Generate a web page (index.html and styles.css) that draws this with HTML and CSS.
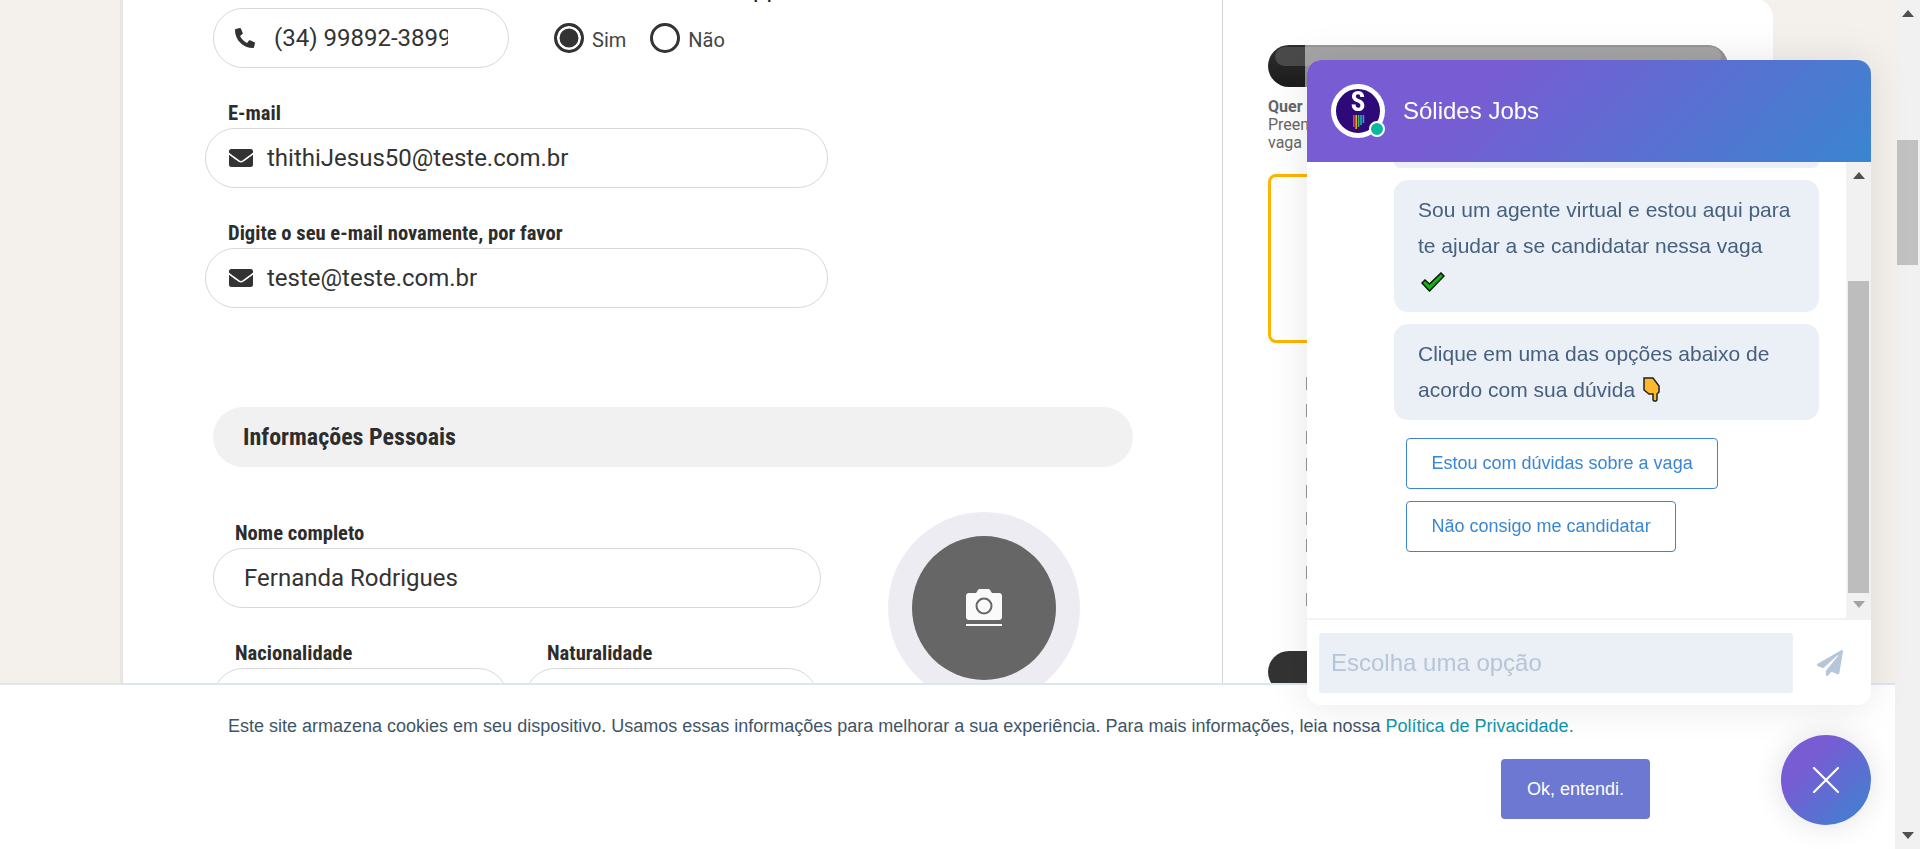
FILE: index.html
```html
<!DOCTYPE html>
<html lang="pt-BR">
<head>
    <meta charset="UTF-8">
    <meta name="viewport" content="width=device-width, initial-scale=1.0">
    <title>Candidatura</title>
    <link rel="stylesheet" href="styles.css">
</head>
<body>
    <div class="page">
        <div class="viewport">
            <div class="card">
                <!-- Form column -->
                <div class="form-col">
                    <div class="phone-row">
                        <div class="field field-phone">
                            <label class="field-label">Telefone ou celular</label>
                            <div class="input-box">
                                <svg class="icon-phone" viewBox="0 0 512 512"><path fill="#333" transform="matrix(-1 0 0 1 512 0)" d="M493.4 24.6l-104-24c-11.3-2.6-22.9 3.3-27.5 13.9l-48 112c-4.2 9.8-1.4 21.3 6.9 28l60.6 49.6c-36 76.7-98.9 140.5-177.2 177.2l-49.6-60.6c-6.8-8.3-18.2-11.1-28-6.9l-112 48C3.9 366.5-2 378.1.6 389.4l24 104C27.1 504.2 36.7 512 48 512c256.1 0 464-207.5 464-464 0-11.2-7.7-20.9-18.6-23.4z"/></svg>
                                <input class="text-input phone-input" type="text" value="(34) 99892-3899">
                            </div>
                        </div>
                        <div class="whats">
                            <div class="whats-label">Este número é WhatsApp</div>
                            <div class="radios">
                                <span class="radio radio-on"></span><span class="radio-text">Sim</span>
                                <span class="radio"></span><span class="radio-text">Não</span>
                            </div>
                        </div>
                    </div>

                    <div class="field field-wide">
                        <label class="field-label">E-mail</label>
                        <div class="input-box">
                            <svg class="icon-mail" viewBox="0 0 512 512"><path fill="#333" d="M502.3 190.8c3.9-3.1 9.7-.2 9.7 4.7V400c0 26.5-21.5 48-48 48H48c-26.5 0-48-21.5-48-48V195.6c0-5 5.7-7.8 9.7-4.7 22.4 17.4 52.1 39.5 154.1 113.6 21.1 15.4 56.7 47.8 92.2 47.6 35.7.3 72-32.8 92.3-47.6 102-74.1 131.6-96.3 154-113.7zM256 320c23.2.4 56.6-29.2 73.4-41.4 132.7-96.3 142.8-104.7 173.4-128.7 5.8-4.5 9.2-11.5 9.2-18.9v-19c0-26.5-21.5-48-48-48H48C21.5 64 0 85.5 0 112v19c0 7.4 3.4 14.3 9.2 18.9 30.6 23.9 40.7 32.4 173.4 128.7 16.8 12.2 50.2 41.8 73.4 41.4z"/></svg>
                            <input class="text-input" type="text" value="thithiJesus50@teste.com.br">
                        </div>
                    </div>

                    <div class="field field-wide">
                        <label class="field-label">Digite o seu e-mail novamente, por favor</label>
                        <div class="input-box">
                            <svg class="icon-mail" viewBox="0 0 512 512"><path fill="#333" d="M502.3 190.8c3.9-3.1 9.7-.2 9.7 4.7V400c0 26.5-21.5 48-48 48H48c-26.5 0-48-21.5-48-48V195.6c0-5 5.7-7.8 9.7-4.7 22.4 17.4 52.1 39.5 154.1 113.6 21.1 15.4 56.7 47.8 92.2 47.6 35.7.3 72-32.8 92.3-47.6 102-74.1 131.6-96.3 154-113.7zM256 320c23.2.4 56.6-29.2 73.4-41.4 132.7-96.3 142.8-104.7 173.4-128.7 5.8-4.5 9.2-11.5 9.2-18.9v-19c0-26.5-21.5-48-48-48H48C21.5 64 0 85.5 0 112v19c0 7.4 3.4 14.3 9.2 18.9 30.6 23.9 40.7 32.4 173.4 128.7 16.8 12.2 50.2 41.8 73.4 41.4z"/></svg>
                            <input class="text-input" type="text" value="teste@teste.com.br">
                        </div>
                    </div>

                    <h2 class="section-bar">Informações Pessoais</h2>

                    <div class="personal">
                        <div class="personal-fields">
                            <div class="field">
                                <label class="field-label">Nome completo</label>
                                <div class="input-box input-plain">
                                    <input class="text-input" type="text" value="Fernanda Rodrigues">
                                </div>
                            </div>
                            <div class="field-pair">
                                <div class="field field-nat">
                                    <label class="field-label">Nacionalidade</label>
                                    <div class="input-box"></div>
                                </div>
                                <div class="field field-nat2">
                                    <label class="field-label">Naturalidade</label>
                                    <div class="input-box"></div>
                                </div>
                            </div>
                        </div>
                        <div class="photo">
                            <div class="photo-inner">
                                <svg width="36" height="38" viewBox="0 0 36 38">
                                    <path fill="#fafafa" d="M3 4h7l2-3c.5-.7 1-1 2-1h8c1 0 1.500.3 2 1l2 3h7c1.700 0 3 1.300 3 3v21c0 1.700-1.300 3-3 3H3c-1.700 0-3-1.300-3-3V7c0-1.700 1.300-3 3-3z"/>
                                    <circle cx="18" cy="17" r="7.500" fill="none" stroke="#666" stroke-width="2"/>
                                    <rect y="35" width="36" height="2" fill="#fafafa"/>
                                </svg>
                            </div>
                        </div>
                    </div>
                </div>

                <!-- Right column, mostly under the chat -->
                <div class="side-col">
                    <div class="pill"></div>
                    <p class="side-text"><b>Quer se candidatar?</b><br>Preencha os dados abaixo para se candidatar à<br>vaga</p>
                    <div class="gold-box"></div>
                    <ul class="perks">
                        <li></li><li></li><li></li><li></li><li></li><li></li><li></li><li></li><li></li>
                    </ul>
                    <div class="pill pill-plain"></div>
                </div>
            </div>
        </div>

        <div class="page-scroll">
            <span class="arrow-up"></span>
            <span class="page-thumb"></span>
            <span class="arrow-down"></span>
        </div>
    </div>

    <div class="cookie-bar">
        <p class="cookie-text">Este site armazena cookies em seu dispositivo. Usamos essas informações para melhorar a sua experiência. Para mais informações, leia nossa <a href="#">Política de Privacidade.</a></p>
        <button class="cookie-btn">Ok, entendi.</button>
    </div>

    <div class="chat">
        <div class="chat-head">
            <div class="avatar">
                <span class="avatar-s">S</span>
                <svg class="avatar-bars" width="12" height="14" viewBox="0 0 12 14">
                    <rect x="0" width="1.600" height="12" fill="#e0453a"/>
                    <rect x="2.400" width="1.600" height="14" fill="#f0a52c"/>
                    <rect x="4.800" width="1.600" height="12" fill="#3fb56a"/>
                    <rect x="7.200" width="1.600" height="10" fill="#1fb5b0"/>
                    <rect x="9.600" width="1.600" height="8" fill="#2f9fe0"/>
                </svg>
                <span class="avatar-dot"></span>
            </div>
            <span class="chat-title">Sólides Jobs</span>
        </div>

        <div class="chat-body">
            <div class="chat-msgs">
                <div class="bubble bubble-cut"></div>
                <div class="bubble">
                    Sou um agente virtual e estou aqui para te ajudar a se candidatar nessa vaga
                    <div class="emoji-line">
                        <svg width="24" height="20" viewBox="0 0 24 20"><path fill="#12b312" stroke="#111" stroke-width="1.500" d="M1 11l3-3 4.500 4L20 1l3 3L8.500 19z"/></svg>
                    </div>
                </div>
                <div class="bubble">
                    Clique em uma das opções abaixo de acordo com sua dúvida
                    <svg class="emoji-hand" width="18" height="25" viewBox="0 0 18 25"><path fill="#fdb92e" stroke="#222" stroke-width="1.500" d="M1 1h9l6 8v6l-2 2v6l-1 1h-2l-1-1v-6H6L1 13z"/></svg>
                </div>
                <div class="chat-options">
                    <button class="option-btn">Estou com dúvidas sobre a vaga</button>
                    <button class="option-btn">Não consigo me candidatar</button>
                </div>
            </div>
            <div class="chat-scroll">
                <span class="arrow-up"></span>
                <span class="chat-thumb"></span>
                <span class="arrow-down arrow-gray"></span>
            </div>
        </div>

        <div class="chat-foot">
            <input class="chat-input" type="text" placeholder="Escolha uma opção">
            <svg class="send-icon" viewBox="0 0 512 512"><path fill="#b6c6d9" d="M476 3.200L12.500 270.600c-18.100 10.400-15.800 35.600 2.200 43.200L121 358.400l287.300-253.200c5.500-4.900 13.300 2.600 8.600 8.300L176 407v80.500c0 23.600 28.500 32.900 42.500 15.800L282 426l124.600 52.200c14.200 6 30.400-2.900 33-18.200l72-432C515 7.800 493.300-6.800 476 3.200z"/></svg>
        </div>
    </div>

    <button class="chat-fab">
        <svg width="28" height="28" viewBox="0 0 28 28"><path stroke="#fff" stroke-width="2.200" stroke-linecap="round" d="M2 2l24 24M26 2L2 26"/></svg>
    </button>
</body>
</html>
```

FILE: styles.css
```css
body {
    margin: 0;
    height: 849px;
    overflow: hidden;
    background-color: #f4f1ed;
    font-family: Roboto, Arial, sans-serif;
    color: #333;
}
.page {
    display: flex;
    height: 849px;
}
.viewport {
    flex: 1;
    overflow: hidden;
}
.card {
    display: flex;
    width: 1650px;
    height: 1000px;
    margin: -2px 0 0 123px;
    background-color: #fff;
    border-radius: 0 20px 0 0;
    box-shadow: -3px 0 0 #e9e6e2;
}

/* form column */
.form-col {
    width: 1100px;
    height: 900px;
    margin-top: -17px;
    border-right: 1px solid #d5d5d5;
    box-sizing: border-box;
}
.field-label {
    display: block;
    height: 24px;
    line-height: 24px;
    margin-bottom: 3px;
    font-size: 20.6px;
    font-weight: 700;
    font-stretch: condensed;
    color: #2d2d2d;
    white-space: nowrap;
}
.input-box {
    display: flex;
    align-items: center;
    height: 60px;
    box-sizing: border-box;
    border: 1px solid #d8d8d8;
    border-radius: 30px;
    background-color: #fff;
}
.text-input {
    flex: 1;
    min-width: 0;
    border: none;
    outline: none;
    padding: 0;
    font-family: Roboto, Arial, sans-serif;
    font-size: 24px;
    color: #333;
    background: none;
}
.phone-row {
    display: flex;
    margin-bottom: 33px;
}
.field-phone {
    width: 296px;
    margin-left: 90px;
}
.field-phone .field-label {
    margin-left: 22px;
}
.field-phone .input-box {
    padding-left: 21px;
}
.icon-phone {
    width: 20px;
    height: 20px;
    margin-right: 19px;
}
.phone-input {
    flex: none;
    width: 174px;
}
.whats {
    margin-left: 45px;
    width: 226px;
}
.whats-label {
    height: 29px;
    line-height: 29px;
    margin: -6px 0 19px;
    font-size: 24px;
    text-align: right;
    white-space: nowrap;
    direction: rtl;
    color: #222;
}
.radios {
    display: flex;
    align-items: center;
}
.radio {
    width: 30px;
    height: 30px;
    box-sizing: border-box;
    border: 3.5px solid #333;
    border-radius: 50%;
    background-color: #fff;
}
.radio-on {
    background-color: #333;
    box-shadow: inset 0 0 0 2.5px #fff;
}
.radio-text {
    margin: 3px 24px 0 8px;
    font-size: 20px;
    color: #444;
}
.field-wide {
    width: 623px;
    margin: 0 0 33px 82px;
}
.field-wide .field-label {
    margin-left: 23px;
}
.field-wide .input-box {
    padding-left: 23px;
}
.icon-mail {
    width: 24px;
    height: 24px;
    margin-right: 14px;
}
.section-bar {
    width: 920px;
    height: 60px;
    margin: 99px 0 54px 90px;
    padding-left: 30px;
    box-sizing: border-box;
    line-height: 60px;
    font-size: 24px;
    font-weight: 700;
    font-stretch: condensed;
    color: #2d2d2d;
    background-color: #f1f1f1;
    border-radius: 30px;
}
.personal {
    display: flex;
    margin-left: 90px;
}
.personal-fields {
    width: 608px;
}
.personal-fields .field-label {
    margin-left: 22px;
}
.input-plain {
    padding-left: 30px;
}
.field-pair {
    display: flex;
    margin-top: 33px;
    gap: 17px;
}
.field-nat {
    width: 295px;
}
.field-nat2 {
    width: 293px;
}
.photo {
    display: flex;
    align-items: center;
    justify-content: center;
    width: 192px;
    height: 192px;
    margin: -9px 0 0 67px;
    border-radius: 50%;
    background-color: #eeecf3;
}
.photo-inner {
    display: flex;
    align-items: center;
    justify-content: center;
    width: 144px;
    height: 144px;
    border-radius: 50%;
    background-color: #666;
}

/* right column */
.side-col {
    flex: 1;
    padding: 47px 0 0 45px;
}
.pill {
    position: relative;
    width: 460px;
    height: 42px;
    overflow: hidden;
    border-radius: 21px;
    background: linear-gradient(#2e2e2e, #1c1c1c);
}
.pill::before {
    content: "";
    position: absolute;
    left: 7px;
    right: 7px;
    top: 2px;
    height: 19px;
    border-radius: 10px;
    background-color: #4a4a4a;
}
.pill::after {
    content: "";
    position: absolute;
    left: 37px;
    right: 0;
    top: 0;
    bottom: 0;
    background-color: rgba(255, 255, 255, 0.5);
}
.pill-plain {
    margin-top: 31px;
    background: #333;
}
.pill-plain::before,
.pill-plain::after {
    display: none;
}
.side-text {
    margin: 11px 0 22px;
    font-size: 16px;
    line-height: 18px;
    color: #666;
    white-space: nowrap;
}
.gold-box {
    width: 460px;
    height: 169px;
    box-sizing: border-box;
    border: 3px solid #ffb400;
    border-radius: 8px;
}
.perks {
    list-style: none;
    margin: 34px 0 0;
    padding: 0 0 0 38px;
}
.perks li {
    height: 27px;
}
.perks li::before {
    content: "";
    display: block;
    width: 2px;
    height: 13px;
    background-color: #999;
}

/* page scrollbar */
.page-scroll,
.chat-scroll {
    display: flex;
    flex-direction: column;
    align-items: center;
    width: 25px;
    background-color: #f1f1f1;
}
.arrow-up,
.arrow-down {
    width: 0;
    height: 0;
    border-left: 6px solid transparent;
    border-right: 6px solid transparent;
}
.arrow-up {
    margin-top: 10px;
    border-bottom: 7px solid #505050;
}
.arrow-down {
    margin-top: auto;
    margin-bottom: 10px;
    border-top: 7px solid #505050;
}
.arrow-gray {
    border-top-color: #a3a3a3;
}
.page-thumb {
    width: 21px;
    height: 125px;
    margin-top: 123px;
    background-color: #c1c1c1;
}
.chat-thumb {
    width: 21px;
    height: 312px;
    margin-top: 102px;
    background-color: #bdbdbd;
}

/* cookie bar */
.cookie-bar {
    position: fixed;
    left: 0;
    right: 25px;
    top: 683px;
    bottom: 0;
    display: flex;
    flex-direction: column;
    padding: 31px 245px 0 228px;
    border-top: 2px solid #dfe5ef;
    background-color: #fff;
}
.cookie-text {
    margin: 0;
    font-family: "Liberation Sans", Arial, sans-serif;
    font-size: 18px;
    line-height: 20px;
    color: #3e5568;
    white-space: nowrap;
}
.cookie-text a {
    color: #0e96ad;
    text-decoration: none;
}
.cookie-btn {
    align-self: flex-end;
    width: 149px;
    height: 60px;
    margin-top: 23px;
    border: none;
    border-radius: 4px;
    font-family: "Liberation Sans", Arial, sans-serif;
    font-size: 18px;
    color: #fff;
    background-color: #6c78d2;
}

/* chat widget */
.chat {
    position: fixed;
    left: 1307px;
    top: 60px;
    width: 564px;
    height: 645px;
    display: flex;
    flex-direction: column;
    overflow: hidden;
    border-radius: 14px;
    background-color: #fff;
    box-shadow: 0 0 40px rgba(0, 0, 0, 0.1);
    font-family: "Liberation Sans", Arial, sans-serif;
}
.chat-head {
    display: flex;
    align-items: center;
    height: 102px;
    padding-left: 24px;
    background: linear-gradient(135deg, #785cd3 30%, #3a85d0 100%);
}
.avatar {
    position: relative;
    display: block;
    width: 54px;
    height: 54px;
    box-sizing: border-box;
    border: 5px solid #fff;
    border-radius: 50%;
    background-color: #2e0a78;
}
.avatar-s {
    position: absolute;
    left: 0;
    right: 0;
    top: 0;
    text-align: center;
    font-family: Roboto, Arial, sans-serif;
    font-stretch: condensed;
    font-size: 27px;
    line-height: 26px;
    font-weight: 700;
    color: #fff;
}
.avatar-bars {
    position: absolute;
    left: 17px;
    top: 26px;
}
.avatar-dot {
    position: absolute;
    right: -5px;
    bottom: -4px;
    width: 12px;
    height: 12px;
    border: 2px solid #fff;
    border-radius: 50%;
    background-color: #06b9a0;
}
.chat-title {
    margin-left: 18px;
    font-size: 24px;
    color: #fff;
}
.chat-body {
    display: flex;
    height: 456px;
}
.chat-msgs {
    flex: 1;
    padding: 0 27px 0 87px;
}
.bubble {
    margin-bottom: 12px;
    padding: 12px 24px;
    font-size: 21px;
    line-height: 36px;
    color: #47607f;
    background-color: #ebeff6;
    border-radius: 14px;
}
.bubble-cut {
    height: 6px;
    padding: 0;
    border-radius: 0 0 14px 14px;
}
.emoji-line {
    display: flex;
    align-items: center;
    height: 36px;
    padding-left: 3px;
}
.emoji-hand {
    vertical-align: -5px;
    margin-left: 2px;
}
.chat-options {
    display: flex;
    flex-direction: column;
    align-items: flex-start;
    gap: 12px;
    margin: 18px 0 0 12px;
}
.option-btn {
    height: 51px;
    padding: 0 24.5px;
    border: 1px solid #3a86d4;
    border-radius: 4px;
    font-family: "Liberation Sans", Arial, sans-serif;
    font-size: 18px;
    color: #3a86d4;
    background-color: #fff;
}
.chat-foot {
    display: flex;
    align-items: flex-start;
    flex: 1;
    padding: 13px 0 0 12px;
    border-top: 2px solid #eff3f8;
}
.chat-input {
    width: 474px;
    height: 60px;
    box-sizing: border-box;
    padding: 0 12px;
    border: none;
    border-radius: 4px;
    outline: none;
    font-family: "Liberation Sans", Arial, sans-serif;
    font-size: 24px;
    background-color: #ebeff6;
}
.chat-input::placeholder {
    color: #b7c5d9;
}
.send-icon {
    width: 26px;
    height: 28px;
    margin: 16px 0 0 24px;
}
.chat-fab {
    position: fixed;
    right: 49px;
    top: 735px;
    display: flex;
    align-items: center;
    justify-content: center;
    width: 90px;
    height: 90px;
    padding: 0;
    border: none;
    border-radius: 50%;
    background: linear-gradient(135deg, #785cd3 30%, #3a85d0 100%);
    box-shadow: 0 0 30px rgba(0, 0, 0, 0.12);
}
```
